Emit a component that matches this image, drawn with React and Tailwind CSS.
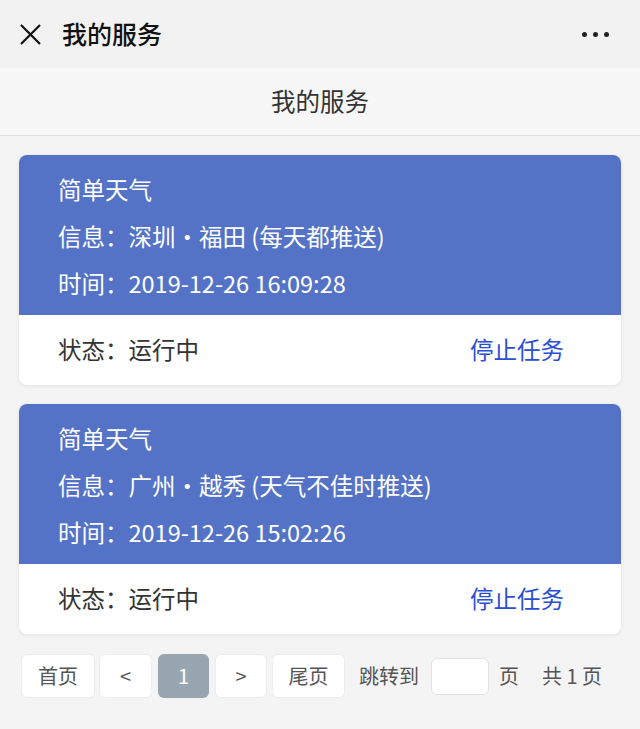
import React from "react";

const tasks = [
  { name: "简单天气", info: "深圳・福田 (每天都推送)", time: "2019-12-26 16:09:28" },
  { name: "简单天气", info: "广州・越秀 (天气不佳时推送)", time: "2019-12-26 15:02:26" },
];

const font = { fontFamily: '"Noto Sans CJK SC", "Noto Sans", sans-serif' };

const TaskCard = ({ task }) => (
  <div className="rounded-lg overflow-hidden bg-white shadow-[0_1px_4px_rgba(0,0,0,0.08)]">
    <div className="bg-[#5473c6] text-white text-[23.5px] pl-[39px] pt-[11px] pb-[8px] leading-[47px]">
      <div>{task.name}</div>
      <div>信息：{task.info}</div>
      <div>时间：{task.time}</div>
    </div>
    <div className="h-[70px] flex items-center justify-between pl-[39px] pr-[57px] text-[23.5px]">
      <span className="text-[#333]">状态：运行中</span>
      <span className="text-[#2b4ed2]">停止任务</span>
    </div>
  </div>
);

const PageBtn = ({ children, active, w }) => (
  <div
    className={`h-[44px] flex items-center justify-center rounded-md text-[20px] ${w} ${
      active ? "bg-[#97a6b1] text-white" : "bg-white text-[#555] border border-[#ececec]"
    }`}
  >
    {children}
  </div>
);

export default function App() {
  return (
    <div className="w-[640px] h-[729px] bg-[#f4f4f4] overflow-hidden" style={font}>
      <div className="h-[68px] bg-[#f2f2f2] flex items-center justify-between px-[19px]">
        <div className="flex items-center gap-[20px]">
          <svg width="23" height="23" viewBox="0 0 23 23" fill="none" stroke="#111" strokeWidth="2.2">
            <path d="M2 2 L21 21 M21 2 L2 21" />
          </svg>
          <span className="text-[25px] text-[#111] font-medium">我的服务</span>
        </div>
        <div className="flex gap-[6px] pr-[12px]">
          <span className="w-[5px] h-[5px] rounded-full bg-[#222]" />
          <span className="w-[5px] h-[5px] rounded-full bg-[#222]" />
          <span className="w-[5px] h-[5px] rounded-full bg-[#222]" />
        </div>
      </div>
      <div className="h-[68px] bg-[#f7f7f7] border-b border-[#e2e2e2] flex items-center justify-center text-[24.5px] text-[#333]">
        我的服务
      </div>
      <div className="px-[19px] pt-[19px] flex flex-col gap-[19px]">
        {tasks.map((t, i) => (
          <TaskCard key={i} task={t} />
        ))}
      </div>
      <div className="flex items-center px-[21px] mt-[20px] text-[20px] text-[#555]">
        <PageBtn w="w-[74px]">首页</PageBtn>
        <div className="w-[4px]" />
        <PageBtn w="w-[53px]">&lt;</PageBtn>
        <div className="w-[6px]" />
        <PageBtn w="w-[51px]" active>1</PageBtn>
        <div className="w-[6px]" />
        <PageBtn w="w-[52px]">&gt;</PageBtn>
        <div className="w-[5px]" />
        <PageBtn w="w-[73px]">尾页</PageBtn>
        <span className="ml-[14px]">跳转到</span>
        <div className="ml-[12px] w-[58px] h-[37px] bg-white rounded-md border border-[#e2e2e2]" />
        <span className="ml-[10px]">页</span>
        <span className="ml-[23px]">共 1 页</span>
      </div>
    </div>
  );
}
